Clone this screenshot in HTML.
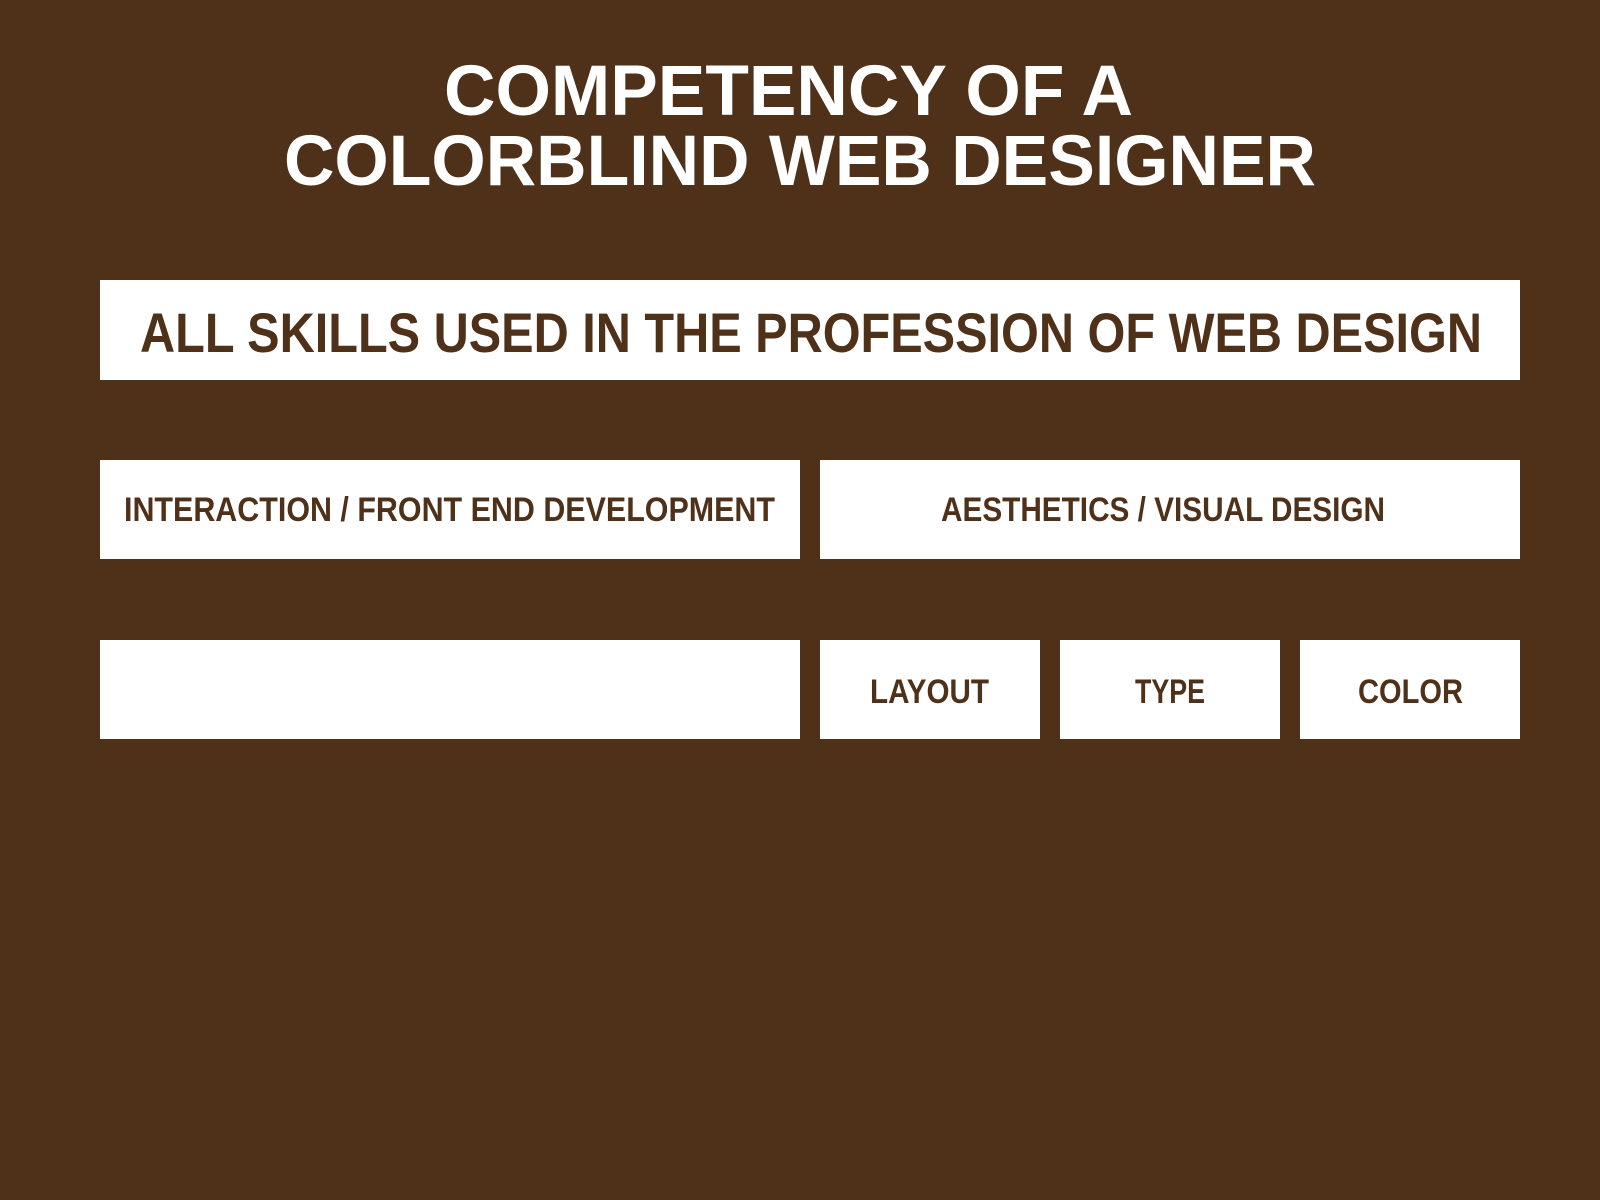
<!DOCTYPE html>
<html><head><meta charset="utf-8"><style>
html,body{margin:0;padding:0;background:#4f311a;}
svg{display:block}
text{font-family:"Liberation Sans",sans-serif;font-weight:bold;}
</style></head><body>
<svg width="1600" height="1200" viewBox="0 0 1600 1200" xmlns="http://www.w3.org/2000/svg">
<rect width="1600" height="1200" fill="#4f311a"/>
<text x="444" y="115" font-size="71" fill="#fff" textLength="689" lengthAdjust="spacingAndGlyphs">COMPETENCY OF A</text>
<text x="284" y="185" font-size="71" fill="#fff" textLength="1032" lengthAdjust="spacingAndGlyphs">COLORBLIND WEB DESIGNER</text>
<rect x="100" y="280" width="1420" height="100" fill="#fff"/>
<rect x="100" y="460" width="700" height="99" fill="#fff"/>
<rect x="820" y="460" width="700" height="99" fill="#fff"/>
<rect x="100" y="640" width="700" height="99" fill="#fff"/>
<rect x="820" y="640" width="220" height="99" fill="#fff"/>
<rect x="1060" y="640" width="220" height="99" fill="#fff"/>
<rect x="1300" y="640" width="220" height="99" fill="#fff"/>
<g fill="#4f311a">
<text x="140" y="352" font-size="56" textLength="1342" lengthAdjust="spacingAndGlyphs">ALL SKILLS USED IN THE PROFESSION OF WEB DESIGN</text>
<text x="124" y="521" font-size="34" textLength="651" lengthAdjust="spacingAndGlyphs">INTERACTION / FRONT END DEVELOPMENT</text>
<text x="941" y="521" font-size="34" textLength="444" lengthAdjust="spacingAndGlyphs">AESTHETICS / VISUAL DESIGN</text>
<text x="870" y="703" font-size="34" textLength="119" lengthAdjust="spacingAndGlyphs">LAYOUT</text>
<text x="1135" y="703" font-size="34" textLength="70" lengthAdjust="spacingAndGlyphs">TYPE</text>
<text x="1358" y="703" font-size="34" textLength="105" lengthAdjust="spacingAndGlyphs">COLOR</text>
</g>
</svg>
</body></html>
